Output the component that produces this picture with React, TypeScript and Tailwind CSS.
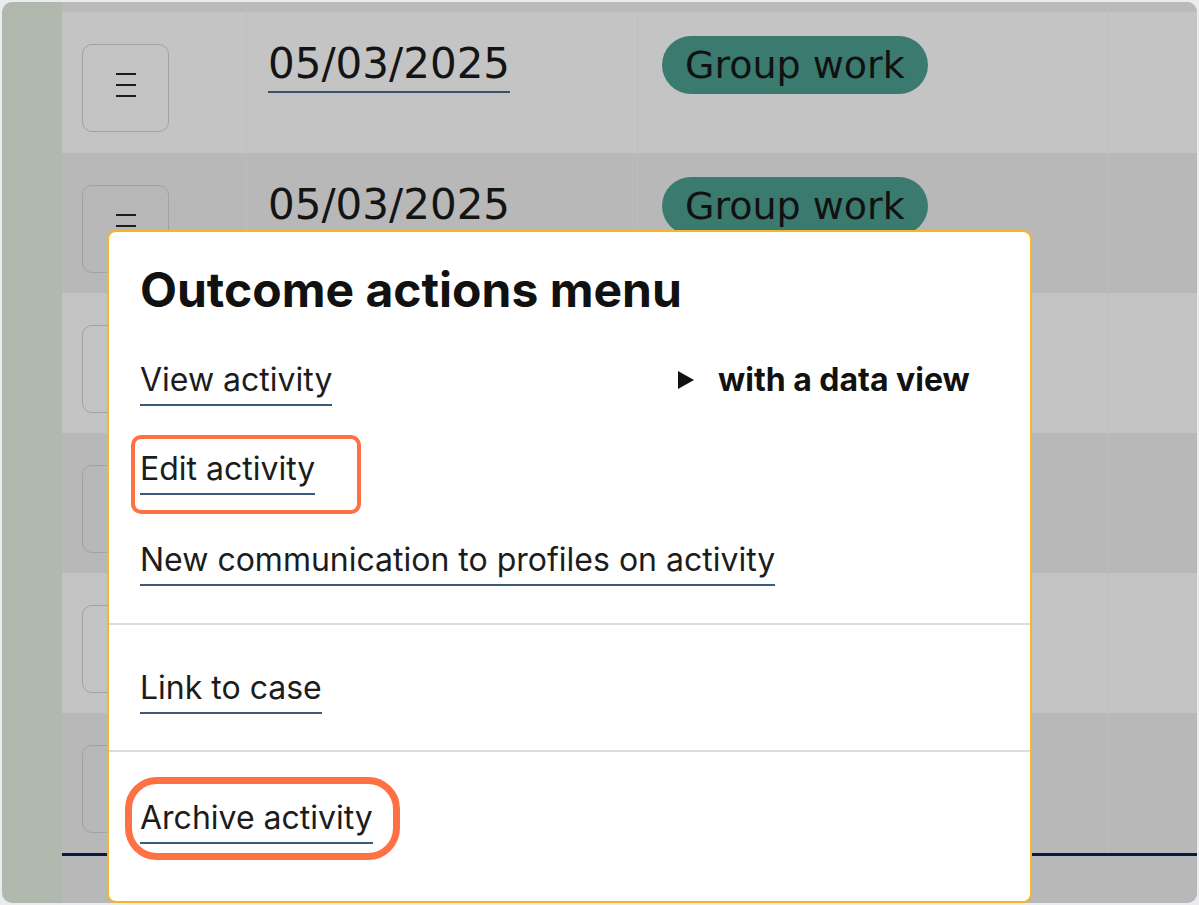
import React from 'react'

const rows = [
  { bg: 'bg-[#c4c4c4]', h: 'h-[141px]' },
  { bg: 'bg-[#b8b8b8]', h: 'h-[140px]' },
  { bg: 'bg-[#c4c4c4]', h: 'h-[140px]' },
  { bg: 'bg-[#b8b8b8]', h: 'h-[140px]' },
  { bg: 'bg-[#c4c4c4]', h: 'h-[140px]' },
  { bg: 'bg-[#b8b8b8]', h: 'h-[140px]' },
]

function MenuButton() {
  return (
    <div className="ml-[20px] mt-[32px] flex h-[88px] w-[87px] flex-col items-center justify-center gap-[9px] rounded-[10px] border-[1.5px] border-[#a2a2a2] pb-[6px]">
      <div className="h-[2px] w-[20px] bg-[#1c1c1c]" />
      <div className="h-[2px] w-[20px] bg-[#1c1c1c]" />
      <div className="h-[2px] w-[20px] bg-[#1c1c1c]" />
    </div>
  )
}

function MenuLink({ label }: { label: string }) {
  return (
    <span className="block border-b-2 border-[#3b5b7c] pb-[8px] pt-[2px] text-[32px] leading-none text-[#1c1c1c]">
      {label}
    </span>
  )
}

export default function App() {
  return (
    <div className="h-[905px] w-[1199px] bg-[#ebebf0] p-[2px]" style={{ fontFamily: 'Inter, "Noto Sans", sans-serif' }}>
      <div className="relative flex h-full overflow-hidden rounded-[10px]">
        {/* side strip */}
        <div className="w-[60px] shrink-0 bg-[#b1b9ae]" />

        {/* table */}
        <div className="flex flex-1 flex-col bg-[#b8b8b8]" style={{ fontFamily: '"DejaVu Sans", Verdana, sans-serif' }}>
          <div className="grid h-[10px] grid-cols-[185px_391px_470px_1fr] bg-[#bababa]">
            <div className="border-r border-[#bdbdbd]" />
            <div className="border-r border-[#bdbdbd]" />
            <div className="border-r border-[#bdbdbd]" />
            <div />
          </div>
          {rows.map((row, i) => (
            <div key={i} className={`grid grid-cols-[185px_391px_470px_1fr] ${row.h} ${row.bg}`}>
              <div className="border-r border-[#bdbdbd]">
                <MenuButton />
              </div>
              <div className="border-r border-[#bdbdbd] pl-[21px] pt-[31px]">
                <span className="inline-block border-b-2 border-[#34516e] pb-[6px] text-[42px] leading-none text-[#141414]">
                  05/03/2025
                </span>
              </div>
              <div className="border-r border-[#bdbdbd] pl-[24px] pt-[24px]">
                <span className="inline-flex h-[58px] items-center rounded-full bg-[#3a7a6f] px-[23px] text-[38px] leading-none text-[#111111]">
                  Group work
                </span>
              </div>
              <div />
            </div>
          ))}
          <div className="h-[3px] bg-[#0b1a45]" />
          <div className="flex-1 bg-[#b8b8b8]" />
        </div>

        {/* actions popup */}
        <div className="absolute left-[105px] top-[228px] h-[673px] w-[925px] rounded-[9px] border-2 border-[#f7b52c] bg-white">
          <div className="pl-[31px] pt-[34px]">
            <h2 className="text-[48px] font-bold leading-none text-[#111111]">Outcome actions menu</h2>
          </div>

          <div className="mt-[48px] flex pl-[31px]">
            <div className="flex w-[537px]">
              <MenuLink label="View activity" />
            </div>
            <svg width="18" height="20" viewBox="0 0 18 20" className="mt-[8px]">
              <path d="M1 1 L17 10 L1 19 Z" fill="#111111" />
            </svg>
            <span className="ml-[23px] pt-[2px] text-[32px] font-bold leading-none text-[#111111]">with a data view</span>
          </div>

          <div className="mt-[45px] flex pl-[31px]">
            <MenuLink label="Edit activity" />
          </div>
          <div className="mt-[47px] flex pl-[31px]">
            <MenuLink label="New communication to profiles on activity" />
          </div>

          <div className="mt-[37px] h-[2px] bg-[#dcdcdc]" />

          <div className="mt-[45px] flex pl-[31px]">
            <MenuLink label="Link to case" />
          </div>

          <div className="mt-[36px] h-[2px] bg-[#dcdcdc]" />

          <div className="mt-[48px] flex pl-[31px]">
            <MenuLink label="Archive activity" />
          </div>

          {/* highlight marks */}
          <div className="absolute left-[22px] top-[203px] h-[79px] w-[230px] rounded-[10px] border-4 border-[#ff7043]" />
          <div className="absolute left-[16px] top-[545px] h-[83px] w-[275px] rounded-[32px] border-[7px] border-[#ff7043]" />
        </div>
      </div>
    </div>
  )
}
